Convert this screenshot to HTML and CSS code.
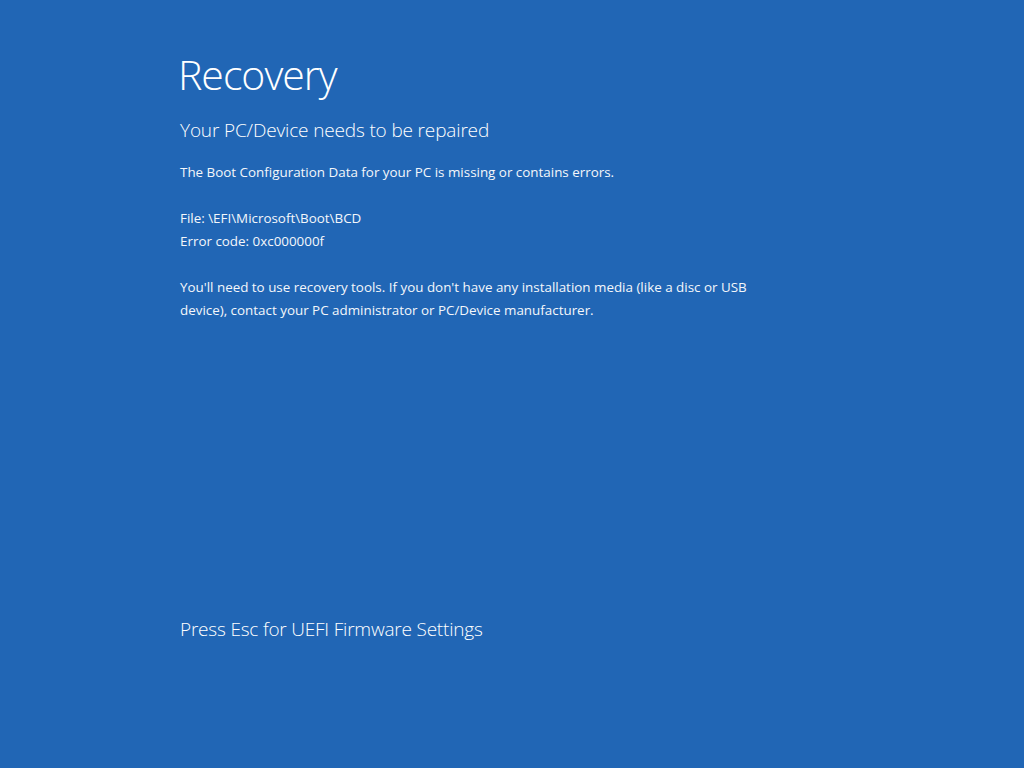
FILE: index.html
```html
<!DOCTYPE html>
<html>
<head>
<meta charset="utf-8">
<link rel="stylesheet" href="styles.css">
</head>
<body>
<main class="screen">
  <div class="content">
    <h1 class="title">Recovery</h1>
    <h2 class="subtitle">Your PC/Device needs to be repaired</h2>
    <p class="text">The Boot Configuration Data for your PC is missing or contains errors.</p>
    <p class="text">File: \EFI\Microsoft\Boot\BCD<br>Error code: 0xc000000f</p>
    <p class="text">You'll need to use recovery tools. If you don't have any installation media (like a disc or USB<br>device), contact your PC administrator or PC/Device manufacturer.</p>
  </div>
  <div class="footer">Press Esc for UEFI Firmware Settings</div>
</main>
</body>
</html>
```

FILE: styles.css
```css
html, body {
  margin: 0;
  padding: 0;
  height: 100%;
}
body {
  background: #2166b5;
  color: #ffffff;
  font-family: "Open Sans", "Noto Sans", sans-serif;
}
.screen {
  height: 768px;
  box-sizing: border-box;
  padding-left: 180px;
  display: flex;
  flex-direction: column;
}
.content {
  padding-top: 46px;
}
.title {
  margin: 0 0 0 -2px;
  font-size: 41px;
  font-weight: 300;
  line-height: 56px;
  letter-spacing: -1px;
}
.subtitle {
  margin: 14px 0 17px;
  font-size: 19px;
  font-weight: 300;
  line-height: 28px;
  letter-spacing: -0.15px;
}
.text {
  margin: 0 0 23px;
  font-size: 13.4px;
  line-height: 23px;
  color: #f4f7fb;
}
.footer {
  margin-top: 270px;
  font-size: 19px;
  font-weight: 300;
  line-height: 28px;
  letter-spacing: -0.2px;
}
```
